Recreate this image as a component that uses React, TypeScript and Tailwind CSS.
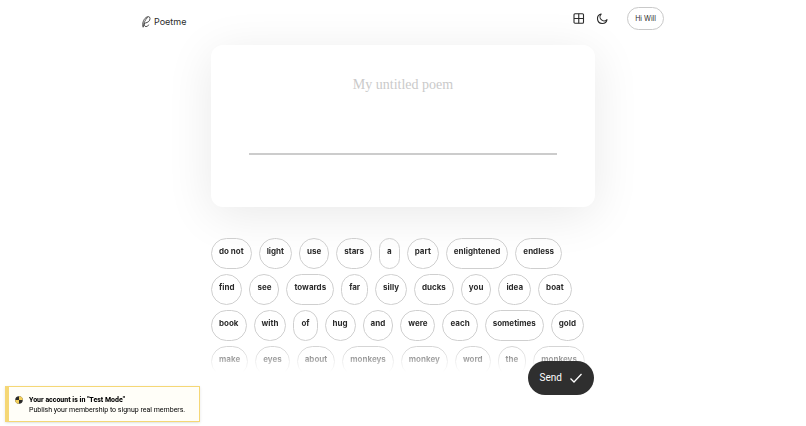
import React from "react";

const words = [
  "do not", "light", "use", "stars", "a", "part", "enlightened", "endless",
  "find", "see", "towards", "far", "silly", "ducks", "you", "idea", "boat",
  "book", "with", "of", "hug", "and", "were", "each", "sometimes", "gold",
  "make", "eyes", "about", "monkeys", "monkey", "word", "the", "monkeys",
];

const Header = () => {
  return (
    <header className="w-full max-w-[522px] mx-auto flex items-start justify-between pt-[7px]">
      <a href="#" className="flex items-center gap-[3px] mt-2 text-[9px] leading-3.5">
        {/* quill */}
        <svg className="w-[9px] h-3" viewBox="0 0 18 24" fill="none" stroke="currentColor" strokeLinecap="round">
          <path d="M2 22C0 15 3 7 8 3c4-3 8-2 8 2 0 5-4 8-9 9" strokeWidth="1.700" />
          <path d="M3 21C3 14 6 8 11 3" strokeWidth="1.500" />
          <path d="M5 15c-1 4 0 6 3 6s4-1 5-3" strokeWidth="1.700" />
        </svg>
        Poetme
      </a>
      <div className="flex items-center">
        <button aria-label="Layout">
          <svg className="w-3 h-3" viewBox="0 0 24 24" fill="none" stroke="currentColor" strokeWidth="2.200">
            <rect x="2" y="1.500" width="19" height="19" rx="2" />
            <path d="M11.500 1.500v19M2 11h19" />
          </svg>
        </button>
        <button aria-label="Dark mode" className="ml-[11px]">
          <svg className="w-3 h-3" viewBox="0 0 24 24" fill="none" stroke="currentColor" strokeWidth="2.200" strokeLinejoin="round">
            <path d="M22 13.200A9.600 9.600 0 1 1 10.300 2a7.800 7.800 0 0 0 11.700 11.200z" />
          </svg>
        </button>
        <button className="ml-[19px] h-[23px] px-[7px] rounded-full border border-[#c9c9c9] bg-white text-[7px] leading-3">
          Hi Will
        </button>
      </div>
    </header>
  );
};

const App = () => {
  return (
    <div className="min-h-screen overflow-hidden bg-white text-[#2b2b2b] font-['Inter',sans-serif]">
      <Header />
      <main className="w-full max-w-sm mx-auto mt-[15px]">
        {/* poem */}
        <section className="rounded-xl bg-white px-[38px] pt-7 pb-[52px] shadow-[0_8px_48px_rgba(0,0,0,0.09)]">
          <input
            type="text"
            aria-label="Poem title"
            placeholder="My untitled poem"
            className="block w-full h-6 text-center text-[14px] font-['Liberation_Serif',serif] placeholder:text-[#cacaca] outline-none"
          />
          <hr className="mt-14 border-0 h-0.5 bg-[#cccccc]" />
        </section>
        {/* words */}
        <div className="mt-[31px] h-[134px] overflow-hidden mask-[linear-gradient(to_bottom,black_78%,transparent_100%)]">
          <div className="flex flex-wrap gap-x-[7px] gap-y-[5px]">
            {words.map((word, i) => (
              <button
                key={i}
                className="h-[31px] px-[7px] pb-1.5 rounded-full border border-[#cfcfcf] text-[8px] leading-3 font-bold"
              >
                {word}
              </button>
            ))}
          </div>
        </div>
        <div className="relative flex justify-end -mt-[11px]">
          <button className="flex items-center gap-2 h-[34px] px-3 mr-px rounded-full bg-[#2f2f2f] text-white text-[10px] leading-4 font-['Roboto',sans-serif]">
            Send
            <svg className="w-3 h-3" viewBox="0 0 24 24" fill="none" stroke="currentColor" strokeWidth="2.500">
              <path d="M1 13l7 7L23 4" />
            </svg>
          </button>
        </div>
      </main>
      {/* test mode notice */}
      <aside className="fixed left-[5px] bottom-1 flex items-start gap-1.5 border border-l-4 border-[#f5d776] bg-[#fffef8] pl-1.5 pr-3.5 pt-2 pb-1.5 text-[7px] leading-[10px] text-black shadow-sm font-['Roboto',sans-serif]">
        <svg className="w-2 h-2 mt-px" viewBox="0 0 16 16">
          <circle cx="8" cy="8" r="7.500" fill="#2b2b2b" />
          <path d="M8 8V.500A7.500 7.500 0 0 1 15.500 8zM8 8v7.500A7.500 7.500 0 0 1 .500 8z" fill="#f2cf5b" />
        </svg>
        <div>
          <p className="font-extrabold">Your account is in "Test Mode"</p>
          <p>Publish your membership to signup real members.</p>
        </div>
      </aside>
    </div>
  );
};

export default App;
